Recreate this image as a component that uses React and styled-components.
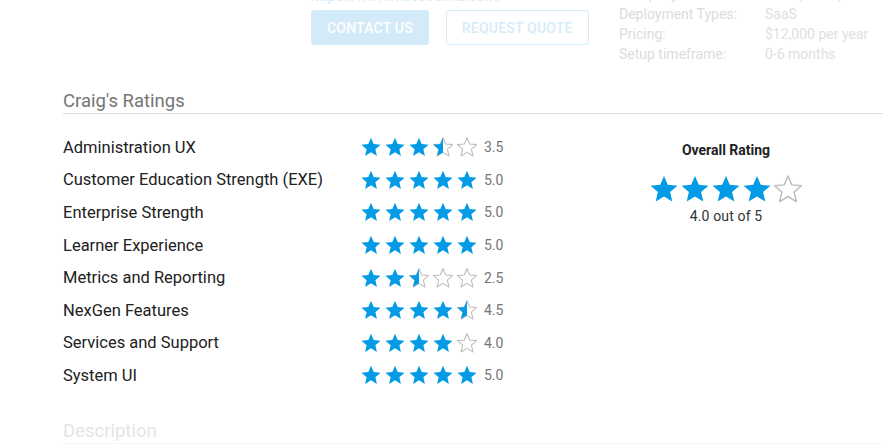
import React from "react";
import styled, { createGlobalStyle } from "styled-components";

const BLUE = "#039be5";
const GREY_STAR = "#bdbdbd";

const GlobalStyle = createGlobalStyle`
  body {
    margin: 0;
    background: #fff;
    font-family: Roboto, "Liberation Sans", Arial, sans-serif;
    overflow: hidden;
  }
`;

// page is scrolled a little, so the top row is cut
const Page = styled.div`
  margin-top: -16px;
  padding: 0 5px 0 63px;
`;

const TopSection = styled.section`
  display: grid;
  grid-template-columns: 248px 308px 1fr;
`;

const Actions = styled.div`
  display: flex;
  flex-direction: column;
  padding-top: 4px;
`;

const Url = styled.div`
  font-size: 14px;
  line-height: 16px;
  color: #d3ebf8;
`;

const ButtonRow = styled.div`
  display: flex;
  gap: 17px;
  margin-top: 6px;
`;

const Button = styled.button`
  box-sizing: border-box;
  height: 35px;
  padding: 0 15px;
  border-radius: 3px;
  font-family: inherit;
  font-size: 14px;
  font-weight: 500;
  letter-spacing: 0.2px;
  text-transform: uppercase;
  border: 1px solid #d3ebf9;
  background: ${(p) => (p.$filled ? "#d3ebf9" : "#fff")};
  color: ${(p) => (p.$filled ? "#fff" : "#d5ecf9")};
`;

const InfoTable = styled.div`
  display: grid;
  grid-template-columns: 146px 1fr;
  font-size: 14px;
  line-height: 20px;
  color: #dcdcdc;
`;

const InfoValue = styled.span`
  color: #e0e0e0;
`;

const SectionHeading = styled.h2`
  margin: ${(p) => p.$top}px 0 0;
  padding-bottom: 2px;
  font-size: 18.5px;
  line-height: 20px;
  font-weight: 400;
  color: ${(p) => (p.$faded ? "#e4e4e4" : "#757575")};
  border-bottom: 1px solid ${(p) => (p.$faded ? "#f6f6f6" : "#dedede")};
`;

const RatingsBody = styled.div`
  display: flex;
  margin-top: 17px;
`;

const RatingList = styled.div`
  width: 563px;
`;

const RatingRow = styled.div`
  display: flex;
  align-items: center;
  height: 32.6px;
`;

const Label = styled.span`
  width: 298px;
  font-size: 16.5px;
  color: #212121;
`;

const Stars = styled.div`
  display: flex;
  gap: ${(p) => p.$gap}px;
`;

const Score = styled.span`
  margin-left: 7px;
  font-size: 14px;
  color: #757575;
`;

const Overall = styled.div`
  width: 200px;
  padding-top: 11px;
  display: flex;
  flex-direction: column;
  align-items: center;
`;

const OverallTitle = styled.div`
  font-size: 14px;
  line-height: 16px;
  font-weight: 700;
  color: #212121;
`;

const OverallStars = styled.div`
  margin-top: 17px;
`;

const OverallText = styled.div`
  margin-top: 5px;
  font-size: 14px;
  line-height: 16px;
  letter-spacing: 0.15px;
  color: #333;
`;

const STAR =
  "M12 17.27L18.18 21l-1.64-7.03L22 9.24l-7.19-.61L12 2 9.19 8.63 2 9.24l5.46 4.73L5.82 21z";

const Star = ({ fill, size }) => {
  const id = React.useId();
  return (
    <svg width={size} height={size} viewBox="1.6 1.6 20.8 20.2">
      <defs>
        <clipPath id={id}>
          <rect x="0" y="0" width={2 + 20 * fill} height="24" />
        </clipPath>
      </defs>
      {fill < 1 && (
        <path d={STAR} fill="none" stroke={GREY_STAR} strokeWidth="1.1" strokeLinejoin="round" />
      )}
      {fill > 0 && <path d={STAR} fill={BLUE} clipPath={`url(#${id})`} />}
    </svg>
  );
};

const StarBar = ({ value, size, gap }) => (
  <Stars $gap={gap}>
    {[0, 1, 2, 3, 4].map((i) => (
      <Star key={i} size={size} fill={Math.max(0, Math.min(1, value - i))} />
    ))}
  </Stars>
);

const ratings = [
  ["Administration UX", 3.5],
  ["Customer Education Strength (EXE)", 5],
  ["Enterprise Strength", 5],
  ["Learner Experience", 5],
  ["Metrics and Reporting", 2.5],
  ["NexGen Features", 4.5],
  ["Services and Support", 4],
  ["System UI", 5],
];

const info = [
  ["Company Size:", "SMB (1-500)"],
  ["Deployment Types:", "SaaS"],
  ["Pricing:", "$12,000 per year"],
  ["Setup timeframe:", "0-6 months"],
];

export default function App() {
  return (
    <Page>
      <GlobalStyle />
      <TopSection>
        <div />
        <Actions>
          <Url>https://www.maestrolms.com/</Url>
          <ButtonRow>
            <Button $filled>Contact Us</Button>
            <Button>Request Quote</Button>
          </ButtonRow>
        </Actions>
        <InfoTable>
          {info.map(([k, v]) => (
            <React.Fragment key={k}>
              <span>{k}</span>
              <InfoValue>{v}</InfoValue>
            </React.Fragment>
          ))}
        </InfoTable>
      </TopSection>

      <SectionHeading $top={27}>Craig's Ratings</SectionHeading>
      <RatingsBody>
        <RatingList>
          {ratings.map(([name, val]) => (
            <RatingRow key={name}>
              <Label>{name}</Label>
              <StarBar value={val} size={20} gap={4} />
              <Score>{val.toFixed(1)}</Score>
            </RatingRow>
          ))}
        </RatingList>
        <Overall>
          <OverallTitle>Overall Rating</OverallTitle>
          <OverallStars>
            <StarBar value={4} size={28} gap={3} />
          </OverallStars>
          <OverallText>4.0 out of 5</OverallText>
        </Overall>
      </RatingsBody>

      <SectionHeading $top={29} $faded>
        Description
      </SectionHeading>
    </Page>
  );
}
